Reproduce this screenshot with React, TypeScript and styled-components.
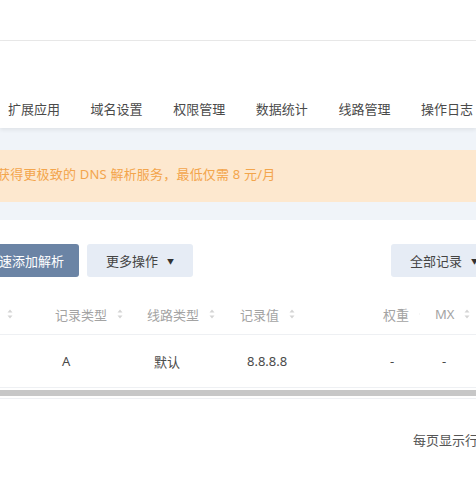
import React from 'react'
import styled, { createGlobalStyle } from 'styled-components'

const GlobalStyle = createGlobalStyle`
  html, body {
    margin: 0;
    padding: 0;
    overflow: hidden;
    width: 476px;
    height: 477px;
    background: #ffffff;
  }
  body {
    font-family: "Noto Sans", "Noto Sans CJK SC", sans-serif;
    font-size: 13px;
    color: #444;
  }
`

const Page = styled.div`
  width: 476px;
  height: 477px;
  overflow: hidden;
  background: #ffffff;
`

const TopBar = styled.div`
  height: 40px;
  background: #ffffff;
  border-bottom: 1px solid #e9e9e9;
`

const NavSection = styled.div`
  height: 87px;
  background: #ffffff;
  display: flex;
  align-items: flex-end;
  position: relative;
  z-index: 1;
  box-shadow: 0 2px 4px rgba(0, 0, 0, 0.07);
`

const Tabs = styled.div`
  display: flex;
  gap: 30.6px;
  padding-left: 8px;
  white-space: nowrap;
`

const Tab = styled.div`
  height: 38px;
  line-height: 38px;
  font-size: 13px;
  color: #4a4a4a;
`

const GrayArea = styled.div`
  background: #f0f4f9;
  padding: 22px 0 18px;
`

const Banner = styled.div`
  height: 52px;
  box-sizing: border-box;
  padding-bottom: 5px;
  background: #fde8cf;
  display: flex;
  align-items: center;
  white-space: nowrap;
  overflow: hidden;
`

const BannerText = styled.span`
  margin-left: -3px;
  letter-spacing: 0.2px;
  color: #f3a54c;
  font-size: 13px;
`

const Card = styled.div`
  background: #ffffff;
`

const Toolbar = styled.div`
  display: flex;
  align-items: center;
  gap: 8px;
  padding-top: 24px;
  margin-left: -29px;
  margin-right: -21px;
`

const Button = styled.div<{ $primary?: boolean }>`
  height: 33px;
  display: flex;
  align-items: center;
  gap: 9px;
  padding: 0 ${({ $primary }) => ($primary ? '15px' : '19px')};
  border-radius: 3px;
  white-space: nowrap;
  font-size: 13px;
  background: ${({ $primary }) => ($primary ? '#6b84a5' : '#e6ecf5')};
  color: ${({ $primary }) => ($primary ? '#ffffff' : '#444444')};
`

const Spacer = styled.div`
  flex: 1;
`

const Caret = styled.span`
  font-size: 7px;
  color: #333;
`

const Table = styled.div`
  margin-top: 23px;
  margin-left: -70px;
`

const HeaderRow = styled.div`
  display: grid;
  grid-template-columns: 110px 92px 93px 143px 52px 80px;
  height: 35px;
  box-sizing: border-box;
  padding-bottom: 6px;
  border-bottom: 1px solid #eef0f3;
`

const HeadCell = styled.div`
  display: flex;
  align-items: center;
  gap: 10px;
  padding-left: 15px;
  color: #a3a3a3;
  font-size: 13px;
  white-space: nowrap;
`

const BodyRow = styled.div`
  display: grid;
  grid-template-columns: 110px 92px 93px 143px 52px 80px;
  height: 52px;
  border-bottom: 1px solid #eef0f3;
`

const BodyCell = styled.div`
  display: flex;
  align-items: center;
  padding-left: 22px;
  color: #4a4a4a;
  font-size: 13px;
  white-space: nowrap;
`

const ScrollTrack = styled.div`
  height: 11px;
  padding-top: 2px;
  box-sizing: border-box;
  border-bottom: 1px solid #eef0f3;
`

const ScrollThumb = styled.div`
  height: 6px;
  background: #c7c7c7;
`

const Footer = styled.div`
  display: flex;
  justify-content: flex-end;
  padding-top: 31px;
  margin-right: -15px;
`

const FooterText = styled.span`
  color: #555;
  font-size: 13px;
  white-space: nowrap;
`

function SortIcon() {
  return (
    <svg width="6" height="10" viewBox="0 0 6 10">
      <path d="M3 0.5 L5.5 3.5 L0.5 3.5 Z" fill="#d4d4d4" />
      <path d="M3 9.5 L5.5 6.5 L0.5 6.5 Z" fill="#d4d4d4" />
    </svg>
  )
}

const columns = ['主机记录', '记录类型', '线路类型', '记录值', '权重', 'MX']
const record = ['www', 'A', '默认', '8.8.8.8', '-', '-']
const tabs = ['扩展应用', '域名设置', '权限管理', '数据统计', '线路管理', '操作日志']

export default function App() {
  return (
    <Page>
      <GlobalStyle />
      <TopBar />
      <NavSection>
        <Tabs>
          {tabs.map((t) => (
            <Tab key={t}>{t}</Tab>
          ))}
        </Tabs>
      </NavSection>
      <GrayArea>
        <Banner>
          <BannerText>获得更极致的 DNS 解析服务，最低仅需 8 元/月</BannerText>
        </Banner>
      </GrayArea>
      <Card>
        <Toolbar>
          <Button $primary>快速添加解析</Button>
          <Button>
            更多操作 <Caret>▼</Caret>
          </Button>
          <Spacer />
          <Button>
            全部记录 <Caret>▼</Caret>
          </Button>
        </Toolbar>
        <Table>
          <HeaderRow>
            {columns.map((c) => (
              <HeadCell key={c}>
                {c}
                <SortIcon />
              </HeadCell>
            ))}
          </HeaderRow>
          <BodyRow>
            {record.map((v, i) => (
              <BodyCell key={i}>{v}</BodyCell>
            ))}
          </BodyRow>
        </Table>
        <ScrollTrack>
          <ScrollThumb />
        </ScrollTrack>
        <Footer>
          <FooterText>每页显示行数</FooterText>
        </Footer>
      </Card>
    </Page>
  )
}
